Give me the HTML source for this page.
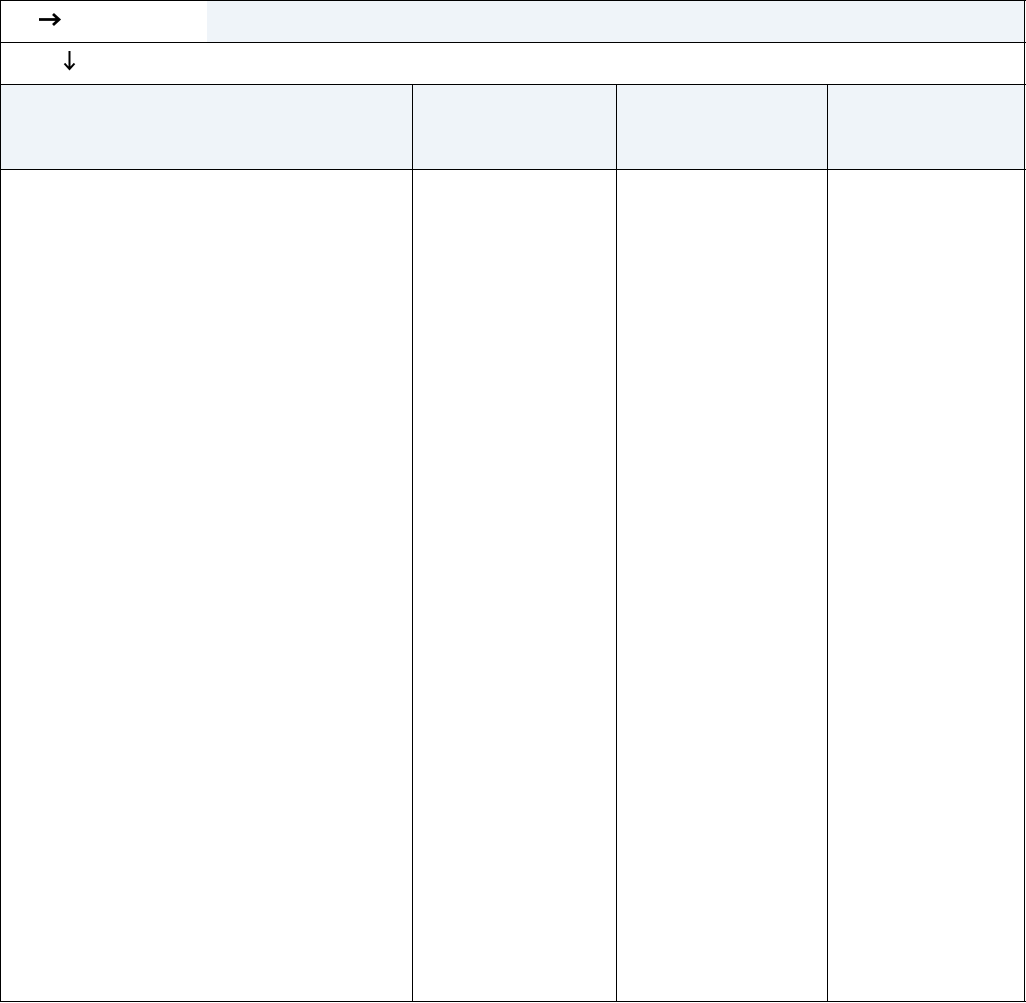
<!DOCTYPE html>
<html><head><meta charset="utf-8"><style>
html,body{margin:0;padding:0;background:#fff;width:1026px;height:1003px;overflow:hidden;position:relative}
.b{position:absolute;background:#000}
.f{position:absolute;background:#eff4f9}
</style></head><body>
<div class="f" style="left:207px;top:1px;width:817px;height:41px"></div>
<div class="f" style="left:1px;top:85px;width:1023px;height:84px"></div>
<div class="b" style="left:0;top:0;width:1026px;height:1px"></div>
<div class="b" style="left:0;top:42px;width:1026px;height:1px"></div>
<div class="b" style="left:0;top:84px;width:1026px;height:1px"></div>
<div class="b" style="left:0;top:169px;width:1026px;height:1px"></div>
<div class="b" style="left:0;top:1001px;width:1026px;height:1px"></div>
<div class="b" style="left:0;top:0;width:1px;height:1002px"></div>
<div class="b" style="left:1024px;top:0;width:1px;height:1002px"></div>
<div class="b" style="left:412px;top:84px;width:1px;height:918px"></div>
<div class="b" style="left:616px;top:84px;width:1px;height:918px"></div>
<div class="b" style="left:827px;top:84px;width:1px;height:918px"></div>
<svg style="position:absolute;left:36px;top:10px" width="30" height="20" viewBox="0 0 30 20">
<path d="M3 9.5H23M17 4L23 9.5L17 15" stroke="#000" stroke-width="2.8" fill="none"/>
</svg>
<svg style="position:absolute;left:60px;top:48px" width="20" height="26" viewBox="0 0 20 26">
<path d="M9.5 3V21M4.5 15.5L9.5 21L14.5 15.5" stroke="#000" stroke-width="2" fill="none"/>
</svg>
</body></html>
